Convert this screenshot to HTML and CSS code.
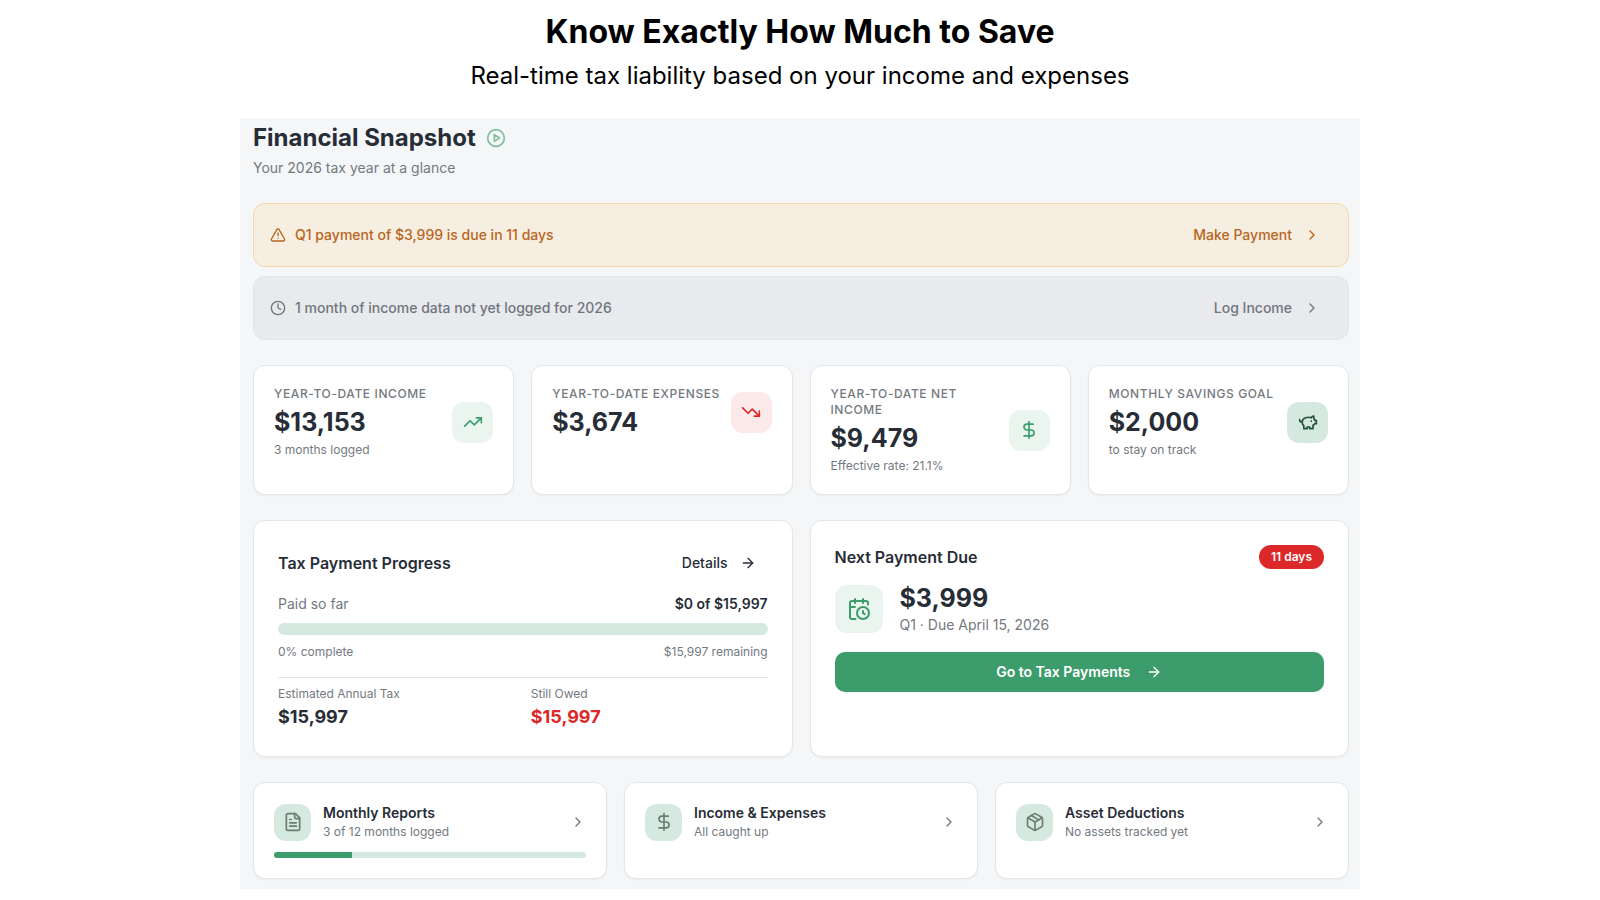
FILE: index.html
```
<!DOCTYPE html>
<html lang="en">
<head>
  <meta charset="utf-8">
  <title>Know Exactly How Much to Save</title>
  <meta name="viewport" content="width=device-width, initial-scale=1">
  <link rel="stylesheet" href="styles.css">
</head>
<body>
  <svg class="sprite" aria-hidden="true">
    <symbol id="chevron" viewBox="0 0 24 24"><path d="m9 18 6-6-6-6"/></symbol>
    <symbol id="arrow" viewBox="0 0 24 24"><path d="M5 12h14"/><path d="m12 5 7 7-7 7"/></symbol>
    <symbol id="dollar" viewBox="0 0 24 24"><path d="M12 2v20"/><path d="M17 5H9.500a3.500 3.500 0 0 0 0 7h5a3.500 3.500 0 0 1 0 7H6"/></symbol>
  </svg>

  <header class="intro">
    <h1>Know Exactly How Much to Save</h1>
    <p>Real-time tax liability based on your income and expenses</p>
  </header>

  <main class="panel">
    <div class="panel-head">
      <h2>Financial Snapshot
        <button class="play" type="button" aria-label="Play tour">
          <svg class="icon" viewBox="0 0 24 24"><circle cx="12" cy="12" r="10"/><path d="m10 8 6 4-6 4z"/></svg>
        </button>
      </h2>
      <p>Your 2026 tax year at a glance</p>
    </div>

    <div class="alerts">
      <div class="alert warning">
        <svg class="icon" viewBox="0 0 24 24"><path d="m21.730 18-8-14a2 2 0 0 0-3.480 0l-8 14A2 2 0 0 0 4 21h16a2 2 0 0 0 1.730-3"/><path d="M12 9v4"/><path d="M12 17h.01"/></svg>
        <span>Q1 payment of $3,999 is due in 11 days</span>
        <a class="action" href="#payment">Make Payment <svg class="icon"><use href="#chevron"/></svg></a>
      </div>
      <div class="alert">
        <svg class="icon" viewBox="0 0 24 24"><circle cx="12" cy="12" r="10"/><path d="M12 6v6l4 2"/></svg>
        <span>1 month of income data not yet logged for 2026</span>
        <a class="action" href="#income">Log Income <svg class="icon"><use href="#chevron"/></svg></a>
      </div>
    </div>

    <section class="stats">
      <div class="card stat">
        <div class="stat-row">
          <div>
            <h3>Year-to-date income</h3>
            <p class="amount">$13,153</p>
            <p class="note">3 months logged</p>
          </div>
          <div class="tile green"><svg class="icon" viewBox="0 0 24 24"><path d="M16 7h6v6"/><path d="m22 7-8.500 8.500-5-5L2 17"/></svg></div>
        </div>
      </div>
      <div class="card stat">
        <div class="stat-row">
          <div>
            <h3>Year-to-date expenses</h3>
            <p class="amount">$3,674</p>
          </div>
          <div class="tile red"><svg class="icon" viewBox="0 0 24 24"><path d="M16 17h6v-6"/><path d="m22 17-8.500-8.500-5 5L2 7"/></svg></div>
        </div>
      </div>
      <div class="card stat">
        <div class="stat-row">
          <div>
            <h3>Year-to-date net income</h3>
            <p class="amount">$9,479</p>
            <p class="note">Effective rate: 21.1%</p>
          </div>
          <div class="tile green"><svg class="icon"><use href="#dollar"/></svg></div>
        </div>
      </div>
      <div class="card stat">
        <div class="stat-row">
          <div>
            <h3>Monthly savings goal</h3>
            <p class="amount">$2,000</p>
            <p class="note">to stay on track</p>
          </div>
          <div class="tile mint"><svg class="icon" viewBox="0 0 24 24"><path d="M19 5c-1.500 0-2.800 1.400-3 2-3.500-1.500-11-.3-11 5 0 1.800 0 3 2 4.500V20h4v-2h3v2h4v-4c1-.5 1.700-1 2-2h2v-4h-2c0-1-.5-1.500-1-2V5z"/><path d="M2 9v1c0 1.100.9 2 2 2h1"/><path d="M16 11h.01"/></svg></div>
        </div>
      </div>
    </section>

    <section class="halves">
      <div class="card">
        <div class="card-head">
          <h3>Tax Payment Progress</h3>
          <a class="action" href="#details">Details <svg class="icon"><use href="#arrow"/></svg></a>
        </div>
        <div class="split paid"><span>Paid so far</span><strong>$0 of $15,997</strong></div>
        <div class="bar" role="progressbar" aria-label="Tax paid" aria-valuenow="0"></div>
        <div class="split note"><span>0% complete</span><span>$15,997 remaining</span></div>
        <dl class="totals">
          <div>
            <dt>Estimated Annual Tax</dt>
            <dd>$15,997</dd>
          </div>
          <div>
            <dt>Still Owed</dt>
            <dd class="owed">$15,997</dd>
          </div>
        </dl>
      </div>
      <div class="card">
        <div class="card-head">
          <h3>Next Payment Due</h3>
          <span class="badge">11 days</span>
        </div>
        <div class="due">
          <div class="tile green large"><svg class="icon" viewBox="0 0 24 24"><path d="M16 14v2.200l1.600 1"/><path d="M16 2v4"/><path d="M21 7.500V6a2 2 0 0 0-2-2H5a2 2 0 0 0-2 2v14a2 2 0 0 0 2 2h3.500"/><path d="M3 10h5"/><path d="M8 2v4"/><circle cx="16" cy="16" r="6"/></svg></div>
          <div>
            <p class="amount">$3,999</p>
            <p class="due-date">Q1 · Due April 15, 2026</p>
          </div>
        </div>
        <button class="primary" type="button">Go to Tax Payments <svg class="icon"><use href="#arrow"/></svg></button>
      </div>
    </section>

    <nav class="shortcuts">
      <a class="card shortcut" href="#reports">
        <div class="shortcut-row">
          <div class="tile mint small"><svg class="icon" viewBox="0 0 24 24"><path d="M15 2H6a2 2 0 0 0-2 2v16a2 2 0 0 0 2 2h12a2 2 0 0 0 2-2V7z"/><path d="M14 2v4a2 2 0 0 0 2 2h4"/><path d="M10 9H8"/><path d="M16 13H8"/><path d="M16 17H8"/></svg></div>
          <div class="shortcut-text">
            <h3>Monthly Reports</h3>
            <p>3 of 12 months logged</p>
          </div>
          <svg class="icon"><use href="#chevron"/></svg>
        </div>
        <div class="bar thin"><div class="fill" style="width: 25%"></div></div>
      </a>
      <a class="card shortcut" href="#transactions">
        <div class="shortcut-row">
          <div class="tile mint small"><svg class="icon"><use href="#dollar"/></svg></div>
          <div class="shortcut-text">
            <h3>Income &amp; Expenses</h3>
            <p>All caught up</p>
          </div>
          <svg class="icon"><use href="#chevron"/></svg>
        </div>
      </a>
      <a class="card shortcut" href="#assets">
        <div class="shortcut-row">
          <div class="tile mint small"><svg class="icon" viewBox="0 0 24 24"><path d="M11 21.730a2 2 0 0 0 2 0l7-4A2 2 0 0 0 21 16V8a2 2 0 0 0-1-1.730l-7-4a2 2 0 0 0-2 0l-7 4A2 2 0 0 0 3 8v8a2 2 0 0 0 1 1.730z"/><path d="M12 22V12"/><path d="m3.290 7 8.710 5 8.710-5"/><path d="m7.500 4.270 9 5.150"/></svg></div>
          <div class="shortcut-text">
            <h3>Asset Deductions</h3>
            <p>No assets tracked yet</p>
          </div>
          <svg class="icon"><use href="#chevron"/></svg>
        </div>
      </a>
    </nav>
  </main>
</body>
</html>
```
FILE: styles.css
```
* {
  box-sizing: border-box;
}
body {
  margin: 0;
  background: #fff;
  color: #272d37;
  font-family: Inter, "Liberation Sans", sans-serif;
  font-size: 14px;
  line-height: 20px;
}
h1, h2, h3, p, dl, dd {
  margin: 0;
}
a {
  color: inherit;
  text-decoration: none;
}
button {
  font: inherit;
  border: 0;
  cursor: pointer;
}
.sprite {
  display: none;
}
.icon {
  display: block;
  flex: none;
  width: 16px;
  height: 16px;
  fill: none;
  stroke: currentColor;
  stroke-width: 2;
  stroke-linecap: round;
  stroke-linejoin: round;
}

/* intro */
.intro {
  padding: 12px 16px 26px;
  text-align: center;
  color: #000;
}
.intro h1 {
  font-size: 32px;
  line-height: 40px;
  font-weight: 700;
}
.intro p {
  margin-top: 8px;
  font-size: 24px;
  line-height: 32px;
}

/* panel */
.panel {
  display: flex;
  flex-direction: column;
  gap: 25px;
  max-width: 1120px;
  margin: 0 auto 12px;
  padding: 4px 11px 10px 13px;
  background: #f4f6f8;
}
.panel-head h2 {
  display: flex;
  align-items: center;
  gap: 10px;
  font-size: 24px;
  line-height: 32px;
  font-weight: 700;
}
.panel-head p {
  margin-top: 4px;
  color: #73797f;
}
.play {
  padding: 0;
  background: none;
  color: #7dbf9c;
}
.play .icon {
  width: 20px;
  height: 20px;
}

/* alerts */
.alerts {
  display: grid;
  gap: 9px;
}
.alert {
  display: flex;
  align-items: center;
  gap: 9px;
  min-height: 64px;
  padding: 0 16px;
  border: 1px solid #e3e6e9;
  border-radius: 12px;
  background: #e8eaed;
  color: #70767d;
  font-weight: 500;
}
.alert.warning {
  border-color: #f4d9a6;
  background: #f6eee0;
  color: #b9651f;
}
.action {
  display: flex;
  align-items: center;
  gap: 12px;
  height: 36px;
  margin-left: auto;
  padding: 0 12px;
  font-weight: 500;
}

/* cards */
.card {
  padding: 24px;
  border: 1px solid #e4e7ea;
  border-radius: 12px;
  background: #fff;
  box-shadow: 0 1px 2px rgba(0, 0, 0, .05);
}
.tile {
  display: flex;
  flex: none;
  align-items: center;
  justify-content: center;
  width: 41px;
  height: 41px;
  border-radius: 12px;
}
.tile .icon {
  width: 20px;
  height: 20px;
}
.tile.large {
  width: 48px;
  height: 48px;
}
.tile.large .icon {
  width: 24px;
  height: 24px;
}
.tile.small {
  width: 37px;
  height: 37px;
}
.green {
  background: #ebf5f0;
  color: #3d9c6b;
}
.red {
  background: #fce9e9;
  color: #dc2828;
}
.mint {
  background: #d6e9e0;
  color: #24513c;
}
.amount {
  font-size: 25px;
  line-height: 32px;
  font-weight: 700;
}
.note {
  font-size: 12px;
  line-height: 16px;
  color: #73797f;
}

/* stats */
.stats {
  display: grid;
  grid-template-columns: repeat(4, 1fr);
  gap: 17px;
}
.stat {
  padding: 20px;
}
.stat-row {
  display: flex;
  align-items: center;
  justify-content: space-between;
}
.stat h3 {
  font-size: 12px;
  line-height: 16px;
  font-weight: 500;
  letter-spacing: .05em;
  text-transform: uppercase;
  color: #73797f;
}
.stat .amount,
.stat .note {
  margin-top: 4px;
}

/* progress and next payment */
.halves {
  display: grid;
  grid-template-columns: 1fr 1fr;
  gap: 17px;
}
.card-head {
  display: flex;
  align-items: center;
  justify-content: space-between;
  margin-bottom: 13px;
}
.card-head h3 {
  font-size: 16px;
  line-height: 20px;
  font-weight: 600;
}
.split {
  display: flex;
  justify-content: space-between;
}
.paid span {
  color: #73797f;
}
.paid strong {
  font-weight: 600;
}
.bar {
  height: 12px;
  margin: 9px 0;
  overflow: hidden;
  border-radius: 6px;
  background: #d6e9e0;
}
.bar.thin {
  height: 6px;
  margin: 11px 0 0;
}
.fill {
  height: 100%;
  background: #3d9c6b;
}
.totals {
  display: grid;
  grid-template-columns: 1fr 1fr;
  gap: 16px;
  margin-top: 17px;
  padding-top: 8px;
  border-top: 1px solid #e1e4e8;
}
.totals dt {
  font-size: 12px;
  line-height: 16px;
  color: #73797f;
}
.totals dd {
  font-size: 18px;
  line-height: 30px;
  font-weight: 700;
}
.totals .owed {
  color: #dc2828;
}
.badge {
  padding: 4px 12px;
  border-radius: 12px;
  background: #dc2828;
  color: #fff;
  font-size: 12px;
  line-height: 16px;
  font-weight: 600;
}
.due {
  display: flex;
  align-items: center;
  gap: 17px;
}
.due-date {
  line-height: 22px;
  color: #73797f;
}
.primary {
  display: flex;
  align-items: center;
  justify-content: center;
  gap: 16px;
  width: 100%;
  height: 40px;
  margin-top: 16px;
  border-radius: 10px;
  background: #3d9c6b;
  color: #fff;
  font-weight: 600;
}

/* shortcuts */
.shortcuts {
  display: grid;
  grid-template-columns: repeat(3, 1fr);
  gap: 17px;
}
.shortcut {
  padding: 20px;
}
.shortcut-row {
  display: flex;
  align-items: center;
  gap: 12px;
}
.shortcut .icon {
  color: #6b7d75;
}
.shortcut-text {
  flex: 1;
}
.shortcut h3 {
  font-size: 14px;
  line-height: 20px;
  font-weight: 600;
}
.shortcut p {
  font-size: 12px;
  line-height: 18px;
  color: #73797f;
}

@media (max-width: 900px) {
  .stats,
  .halves,
  .shortcuts {
    grid-template-columns: 1fr;
  }
}
```
